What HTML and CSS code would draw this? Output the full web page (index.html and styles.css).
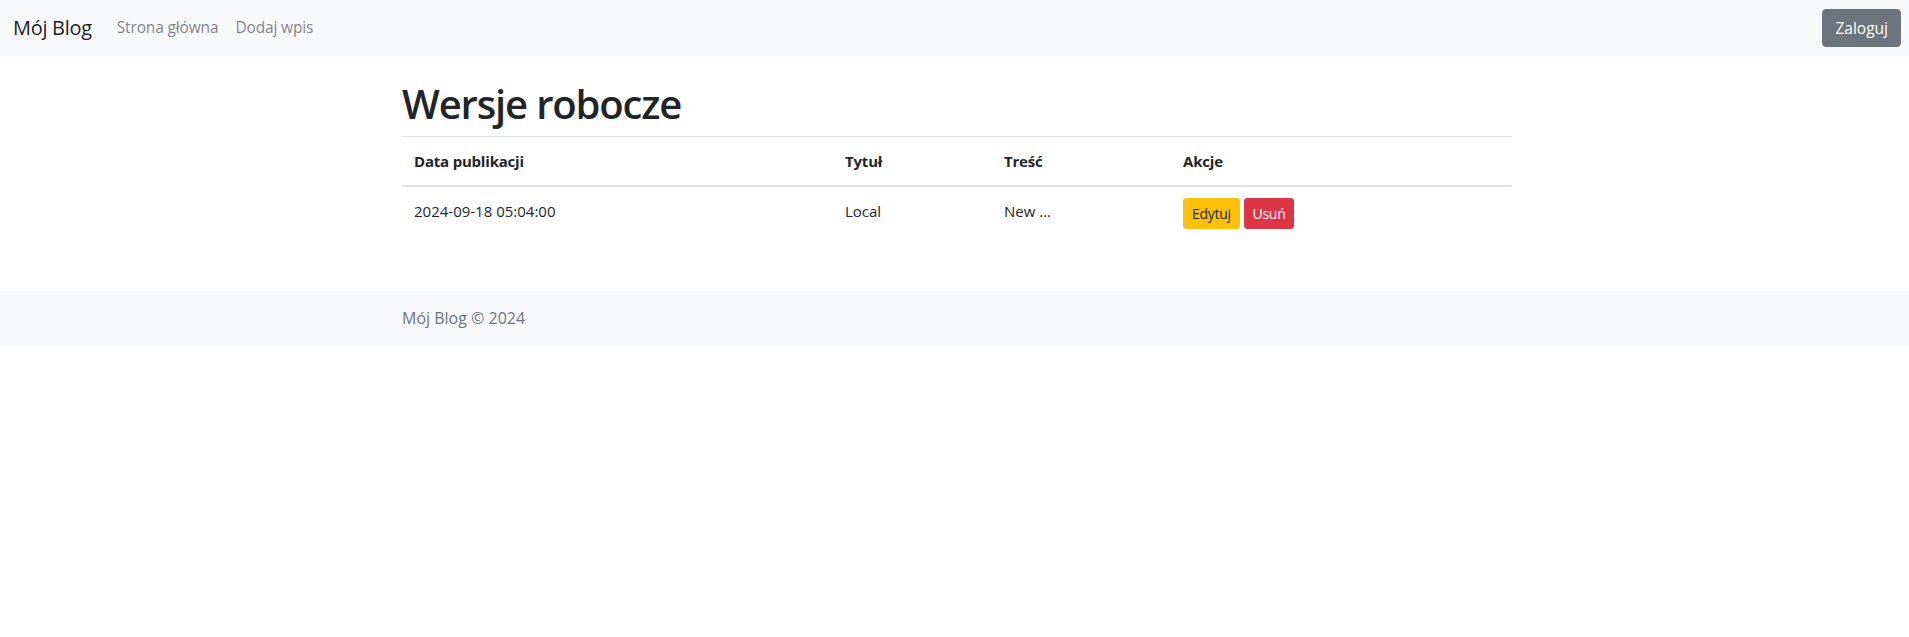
FILE: index.html
```html
<!DOCTYPE html>
<html lang="pl">
<head>
<meta charset="utf-8">
<title>Mój Blog</title>
<link rel="stylesheet" href="styles.css">
</head>
<body>
<nav class="navbar">
  <div class="nav-left">
    <a class="brand" href="#">Mój Blog</a>
    <ul class="nav-links">
      <li><a class="nav-link" href="#">Strona główna</a></li>
      <li><a class="nav-link" href="#">Dodaj wpis</a></li>
    </ul>
  </div>
  <button class="btn btn-secondary">Zaloguj</button>
</nav>

<main class="container main">
  <h1 class="title">Wersje robocze</h1>
  <table class="table">
    <colgroup>
      <col class="c1"><col class="c2"><col class="c3"><col class="c4">
    </colgroup>
    <thead>
      <tr>
        <th>Data publikacji</th>
        <th>Tytuł</th>
        <th>Treść</th>
        <th>Akcje</th>
      </tr>
    </thead>
    <tbody>
      <tr>
        <td>2024-09-18 05:04:00</td>
        <td>Local</td>
        <td>New ...</td>
        <td class="actions">
          <a class="btn btn-sm btn-warning" href="#">Edytuj</a>
          <button class="btn btn-sm btn-danger">Usuń</button>
        </td>
      </tr>
    </tbody>
  </table>
</main>

<footer class="footer">
  <div class="container">
    <span class="footer-text">Mój Blog © 2024</span>
  </div>
</footer>
</body>
</html>
```

FILE: styles.css
```css
* { box-sizing: border-box; }

html, body {
  margin: 0;
  padding: 0;
  background: #fff;
}

body {
  font-family: "Open Sans", "Noto Sans", "Liberation Sans", sans-serif;
  font-size: 16px;
  line-height: 1.5;
  color: #212529;
}

a { text-decoration: none; }

.navbar {
  display: flex;
  align-items: center;
  justify-content: space-between;
  height: 56px;
  padding: 0 8px 0 13px;
  background: #f8f9fa;
}

.nav-left {
  display: flex;
  align-items: center;
}

.brand {
  font-size: 20px;
  line-height: 30px;
  color: rgba(0, 0, 0, 0.9);
  margin-right: 16px;
  letter-spacing: -0.3px;
}

.nav-links {
  display: flex;
  list-style: none;
  margin: 0;
  padding: 0;
}

.nav-link {
  display: block;
  padding: 8px 8px 8px 9px;
  color: rgba(0, 0, 0, 0.5);
  font-size: 15.5px;
  letter-spacing: -0.15px;
}

.btn {
  display: inline-block;
  font-family: inherit;
  font-size: 16px;
  line-height: 24px;
  padding: 6px 12px;
  border: 1px solid transparent;
  border-radius: 4px;
  cursor: pointer;
  vertical-align: middle;
  text-align: center;
}

.btn-secondary {
  background: #6c757d;
  border-color: #6c757d;
  color: #fff;
  font-size: 15.5px;
  padding: 6px 12px;
}

.btn-sm {
  font-size: 14px;
  line-height: 21px;
  padding: 4px 8px;
  border-radius: 3px;
  letter-spacing: -0.3px;
}

.btn-warning {
  background: #ffc107;
  border-color: #ffc107;
  color: #212529;
}

.btn-danger {
  background: #dc3545;
  border-color: #dc3545;
  color: #fff;
}

.container {
  width: 1110px;
  margin-left: calc((100% - 1110px) / 2 + 2.5px);
}

.main {
  padding-top: 24px;
  padding-bottom: 33px;
}

.title {
  margin: 0 0 8px;
  font-size: 40px;
  font-weight: 600;
  line-height: 48px;
  letter-spacing: -1.15px;
}

.table {
  width: 100%;
  table-layout: fixed;
  border-collapse: collapse;
  margin-bottom: 16px;
  font-size: 15px;
}

.c1 { width: 431px; }
.c2 { width: 159px; }
.c3 { width: 179px; }
.c4 { width: 341px; }

.table th,
.table td {
  padding: 12px;
  text-align: left;
  vertical-align: top;
  border-top: 1px solid #dee2e6;
  line-height: 24px;
}

.table th {
  font-weight: 700;
  letter-spacing: -0.2px;
}

.table thead th {
  border-bottom: 2px solid #dee2e6;
}

.actions .btn {
  margin-top: -1px;
}

.footer {
  background: #f8f9fa;
  padding: 16px 0;
}

.footer-text {
  color: #6c757d;
  font-size: 16px;
}
```
